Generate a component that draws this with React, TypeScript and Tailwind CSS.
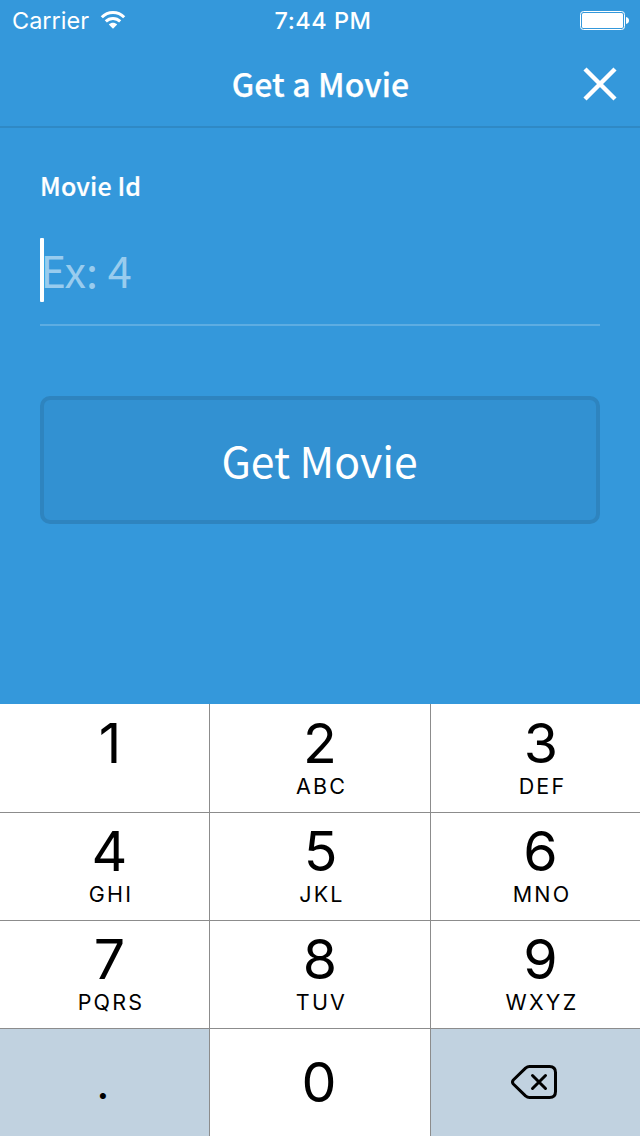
import React from "react";

const DIGIT = "font-['Inter','Liberation_Sans',sans-serif] text-[55.5px] leading-[56px] text-black";

type KeyProps = { digit: string; letters?: string; inset: string };

function Key({ digit, letters, inset }: KeyProps) {
  return (
    <button type="button" className={`flex flex-col items-center bg-white ${inset}`}>
      <span className={DIGIT}>{digit}</span>
      {letters && (
        <span className="mt-[4px] h-[22px] pl-[3px] font-['Inter','Liberation_Sans',sans-serif] text-[21.5px] leading-[22px] tracking-[2.2px] text-black">
          {letters}
        </span>
      )}
    </button>
  );
}

function StatusBar() {
  return (
    <div className="grid h-10 grid-cols-3 items-center pl-3 pr-[11px] font-['Inter','Liberation_Sans',sans-serif] text-[23.5px] leading-9">
      <div className="flex items-center gap-[11px]">
        <span className="pt-px">Carrier</span>
        <svg width="26" height="20" viewBox="0 0 26 20" fill="none" stroke="white">
          <path d="M1.8 7.2C8 .9 18 .9 24.2 7.2" strokeWidth="3" />
          <path d="M5.8 11.4C9.8 7.5 16.2 7.5 20.2 11.4" strokeWidth="3" />
          <path d="M8.8 14.4C11.2 12.2 14.8 12.2 17.2 14.4L13 18.8Z" fill="white" stroke="none" />
        </svg>
      </div>
      <span className="pl-[5px] pt-px text-center font-medium tracking-[0.5px]">7:44 PM</span>
      <svg className="justify-self-end" width="49" height="19" viewBox="0 0 49 19" fill="none">
        <rect x=".5" y=".5" width="44" height="18" rx="3" stroke="white" />
        <rect x="2" y="2" width="41" height="15" rx="1.5" fill="white" />
        <path d="M46 6C50 6.5 50 12.5 46 13Z" fill="white" />
      </svg>
    </div>
  );
}

export default function App() {
  return (
    <main className="flex h-[1136px] w-[640px] flex-col overflow-hidden bg-[#3498db] font-['Noto_Sans_CJK_JP','Noto_Sans_CJK_SC',sans-serif] text-white">
      <StatusBar />
      <header className="grid h-[88px] grid-cols-[80px_1fr_80px] items-center border-b-2 border-[#2f89c5]">
        <span />
        <h1 className="pl-px text-center text-[32px] font-medium leading-10 tracking-[0.1px] [-webkit-text-stroke:0.25px_white]">
          Get a Movie
        </h1>
        <button type="button" aria-label="Close" className="flex justify-center pt-[2px]">
          <svg width="34" height="34" viewBox="0 0 34 34" stroke="white" strokeWidth="4.4">
            <path d="M2 2L32 32M32 2L2 32" />
          </svg>
        </button>
      </header>

      <section className="flex flex-1 flex-col px-10 pt-[41px]">
        <label className="h-8 text-[25px] font-medium leading-8 tracking-[0.15px] [-webkit-text-stroke:0.2px_white]">
          Movie Id
        </label>
        <div className="mt-9 flex h-[89px] items-start border-b-2 border-[#5dade2]">
          <span className="mt-px h-16 w-1 shrink-0 rounded-[1px] bg-white" />
          <span className="-ml-[3.5px] text-[43.2px] leading-[64px] text-[#99ccee]">Ex: 4</span>
        </div>
        <button
          type="button"
          className="mt-[70px] flex h-32 items-center justify-center rounded-[10px] border-4 border-[#2e84bf] bg-[#3291d2] pb-[2px] pr-px text-[42.7px] leading-[60px]"
        >
          Get Movie
        </button>
      </section>

      <div className="grid h-[432px] shrink-0 grid-cols-[209px_220px_209px] grid-rows-[108px_107px_107px_107px] gap-px bg-[#8c8c8c]">
        <Key digit="1" inset="pt-[11px] pl-[11px]" />
        <Key digit="2" letters="ABC" inset="pt-[11px]" />
        <Key digit="3" letters="DEF" inset="pt-[11px] pl-[11px]" />
        <Key digit="4" letters="GHI" inset="pt-[10px] pl-[10px]" />
        <Key digit="5" letters="JKL" inset="pt-[10px] pl-px" />
        <Key digit="6" letters="MNO" inset="pt-[10px] pl-[10px]" />
        <Key digit="7" letters="PQRS" inset="pt-[10px] pl-[10px]" />
        <Key digit="8" letters="TUV" inset="pt-[10px]" />
        <Key digit="9" letters="WXYZ" inset="pt-[10px] pl-[10px]" />
        <button type="button" className="flex items-center justify-center bg-[#c1d2e0] pb-[2px] pr-[3px]">
          <span className="font-['Inter','Liberation_Sans',sans-serif] text-[46px] leading-[56px] text-black">.</span>
        </button>
        <button type="button" className="flex items-center justify-center bg-white pb-px pr-[2px]">
          <span className={DIGIT}>0</span>
        </button>
        <button type="button" aria-label="Delete" className="flex items-center justify-center bg-[#c1d2e0] pb-px pr-[3px]">
          <svg width="46" height="34" viewBox="0 0 46 34" fill="none" stroke="black" strokeWidth="3" strokeLinejoin="round" strokeLinecap="round">
            <path d="M18.5 1.5H38.5Q44.5 1.5 44.5 7.5V26.5Q44.5 32.5 38.5 32.5H18.5Q16.5 32.5 14.5 30.8L2.3 19Q.7 17 2.3 15L14.5 3.2Q16.5 1.5 18.5 1.5Z" />
            <path d="M21.5 10.5L34.5 23.5M34.5 10.5L21.5 23.5" />
          </svg>
        </button>
      </div>
    </main>
  );
}
